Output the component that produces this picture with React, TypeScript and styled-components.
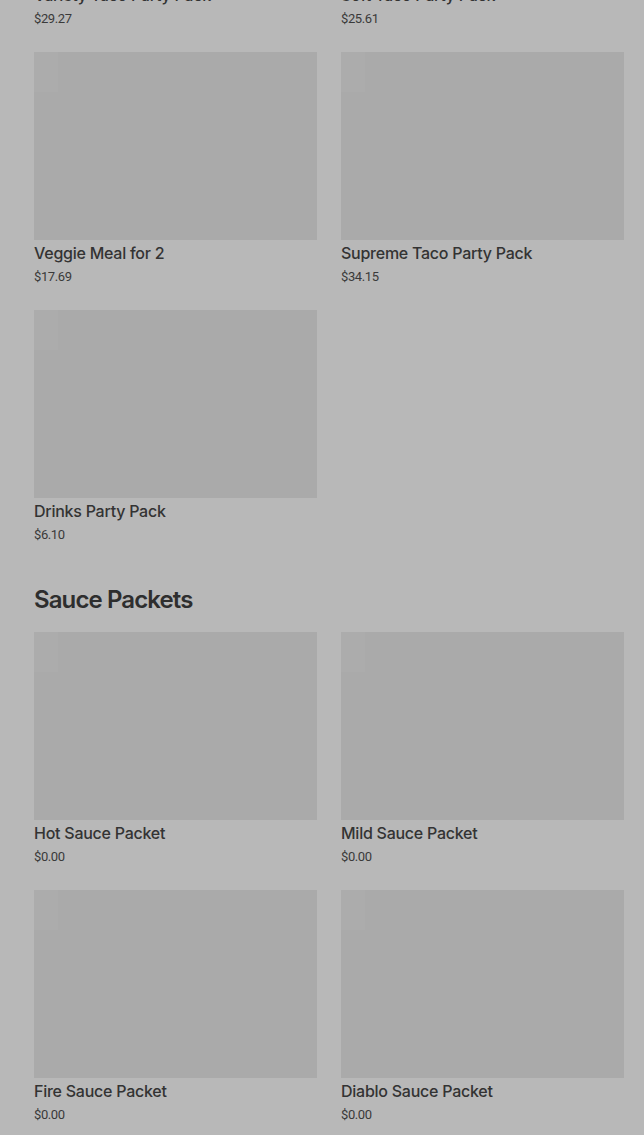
import React from "react";
import styled, { createGlobalStyle } from "styled-components";

const Global = createGlobalStyle`
  html, body {
    margin: 0;
    padding: 0;
    background: #b8b8b8;
    overflow: hidden;
  }
  * { box-sizing: border-box; }
`;

const Page = styled.main`
  width: 644px;
  height: 1135px;
  overflow: hidden;
  padding: 0 20px 0 34px;
  font-family: Inter, "Noto Sans", sans-serif;
`;

const Scroller = styled.div`
  margin-top: -206px;
  display: flex;
  flex-direction: column;
  gap: 39px;
`;

const Section = styled.section`
  display: flex;
  flex-direction: column;
  gap: 16px;
`;

const Heading = styled.h2`
  margin: 0;
  font-size: 24px;
  line-height: 32px;
  font-weight: 600;
  color: #2e2e2e;
  letter-spacing: -0.9px;
`;

const Grid = styled.div`
  display: grid;
  grid-template-columns: 283px 283px;
  column-gap: 24px;
  row-gap: 23px;
`;

const Card = styled.div`
  display: flex;
  flex-direction: column;
`;

const Thumb = styled.div`
  height: 188px;
  margin-bottom: 1px;
  background:
    linear-gradient(#acacac, #acacac) 0 0 / 24px 40px no-repeat,
    #aaaaaa;
`;

const Title = styled.div`
  font-size: 16px;
  line-height: 24px;
  font-weight: 500;
  color: #333333;
  letter-spacing: -0.25px;
  white-space: nowrap;
`;

const Price = styled.div`
  margin-top: 2px;
  font-family: Roboto, Inter, sans-serif;
  font-size: 13px;
  line-height: 20px;
  color: #3a3a3a;
  letter-spacing: -0.4px;
`;

type Item = { name: string; price: string };

const partyPacks: Item[] = [
  { name: "Variety Taco Party Pack", price: "$29.27" },
  { name: "Soft Taco Party Pack", price: "$25.61" },
  { name: "Veggie Meal for 2", price: "$17.69" },
  { name: "Supreme Taco Party Pack", price: "$34.15" },
  { name: "Drinks Party Pack", price: "$6.10" },
];

const sauces: Item[] = [
  { name: "Hot Sauce Packet", price: "$0.00" },
  { name: "Mild Sauce Packet", price: "$0.00" },
  { name: "Fire Sauce Packet", price: "$0.00" },
  { name: "Diablo Sauce Packet", price: "$0.00" },
];

const ItemCard = ({ item }: { item: Item }) => (
  <Card>
    <Thumb />
    <Title>{item.name}</Title>
    <Price>{item.price}</Price>
  </Card>
);

export default function App() {
  return (
    <>
      <Global />
      <Page>
        <Scroller>
          <Section>
            <Grid>
              {partyPacks.map((it) => (
                <ItemCard key={it.name} item={it} />
              ))}
            </Grid>
          </Section>
          <Section>
            <Heading>Sauce Packets</Heading>
            <Grid>
              {sauces.map((it) => (
                <ItemCard key={it.name} item={it} />
              ))}
            </Grid>
          </Section>
        </Scroller>
      </Page>
    </>
  );
}
